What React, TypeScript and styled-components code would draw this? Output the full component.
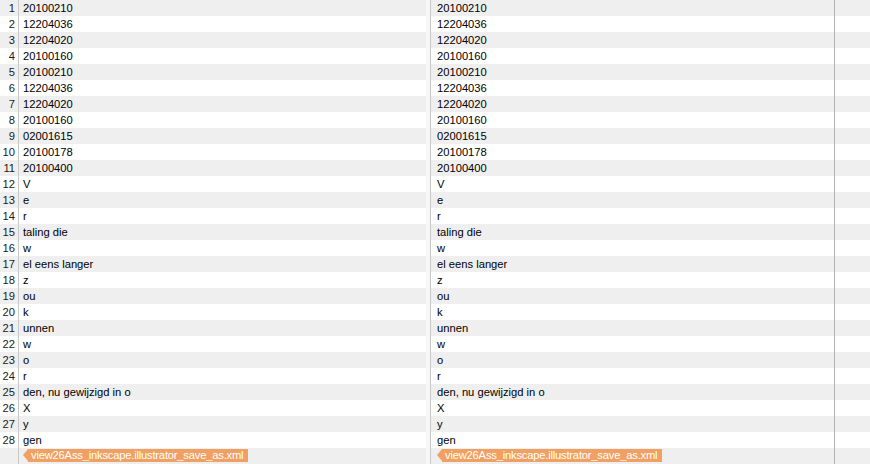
import React from "react";
import styled, { createGlobalStyle } from "styled-components";

const GlobalStyle = createGlobalStyle`
  html, body {
    margin: 0;
    padding: 0;
    background: #ffffff;
  }
  body {
    font-family: "Liberation Sans", Arial, sans-serif;
    font-size: 11.2px;
    color: #000;
  }
`;

const lines = [
  "20100210",
  "12204036",
  "12204020",
  "20100160",
  "20100210",
  "12204036",
  "12204020",
  "20100160",
  "02001615",
  "20100178",
  "20100400",
  "V",
  "e",
  "r",
  "taling die",
  "w",
  "el eens langer",
  "z",
  "ou",
  "k",
  "unnen",
  "w",
  "o",
  "r",
  "den, nu gewijzigd in o",
  "X",
  "y",
  "gen",
];

const fileName = "view26Ass_inkscape.illustrator_save_as.xml";

const Screen = styled.div`
  display: grid;
  grid-template-columns: 426px 1fr;
  width: 870px;
  height: 464px;
  overflow: hidden;
`;

const Pane = styled.div<{ $margin?: number }>`
  position: relative;
  display: flex;
  flex-direction: column;

  ${(p) =>
    p.$margin
      ? `&::after {
    content: "";
    position: absolute;
    top: 0;
    bottom: 0;
    left: ${p.$margin}px;
    width: 1px;
    background: #b4b4b4;
  }`
      : ""}
`;

const Row = styled.div<{ $gutter: number; $odd: boolean }>`
  display: grid;
  grid-template-columns: ${(p) => p.$gutter}px 1fr;
  height: 16px;
  line-height: 16px;
  background: ${(p) => (p.$odd ? "#efefef" : "#ffffff")};
`;

const Gutter = styled.div<{ $plain?: boolean }>`
  text-align: right;
  padding-right: 3px;
  border-right: 1px solid #c8c8c8;
  color: #1a1a1a;
  background: ${(p) => (p.$plain ? "#f7f7f7" : "transparent")};
  white-space: nowrap;
`;

const Code = styled.div<{ $indent: number }>`
  padding-left: ${(p) => p.$indent}px;
  white-space: pre;
  overflow: hidden;
`;

const CrumbRow = styled(Row)`
  line-height: 13px;
`;

const Crumb = styled.span`
  position: relative;
  display: inline-block;
  height: 13px;
  margin-top: 1px;
  margin-left: 5px;
  padding: 0 5px 0 3px;
  background: #f0a062;
  color: #ffffff;
  line-height: 13px;
  letter-spacing: -0.2px;

  &::before {
    content: "";
    position: absolute;
    left: -5px;
    top: 0;
    border-style: solid;
    border-width: 6.5px 5px 6.5px 0;
    border-color: transparent #f0a062 transparent transparent;
  }
`;

function EditorPane({
  numbered,
  gutter,
  indent,
  margin,
}: {
  numbered: boolean;
  gutter: number;
  indent: number;
  margin?: number;
}) {
  return (
    <Pane $margin={margin}>
      {lines.map((text, i) => (
        <Row key={i} $gutter={gutter} $odd={i % 2 === 0}>
          <Gutter $plain={!numbered}>{numbered ? i + 1 : ""}</Gutter>
          <Code $indent={indent}>{text}</Code>
        </Row>
      ))}
      <CrumbRow $gutter={gutter} $odd={true}>
        <Gutter $plain={!numbered} />
        <Code $indent={indent}>
          <Crumb>{fileName}</Crumb>
        </Code>
      </CrumbRow>
    </Pane>
  );
}

export default function App() {
  return (
    <>
      <GlobalStyle />
      <Screen>
        <EditorPane numbered gutter={19} indent={4} />
        <EditorPane numbered={false} gutter={5} indent={6} margin={408} />
      </Screen>
    </>
  );
}
